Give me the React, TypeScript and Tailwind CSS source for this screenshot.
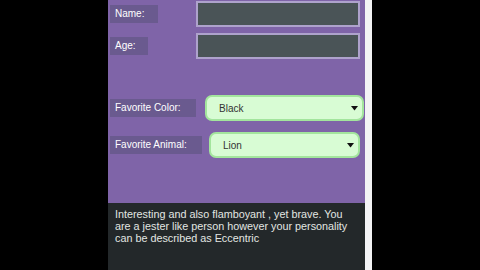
import React from 'react';

const font = { fontFamily: '"Liberation Sans", Arial, sans-serif' };

function Label({ text, w }: { text: string; w: string }) {
  return (
    <div className={`h-[18px] ${w} ml-[2px] bg-[#6a5a8f] text-white text-[10px] leading-[18px] pl-[5px] whitespace-nowrap`}>
      {text}
    </div>
  );
}

function Field() {
  return <div className="h-[26px] w-[164px] bg-[#4a5457] border-2 border-[#aea2cc]" />;
}

function Picker({ value, w }: { value: string; w: string }) {
  return (
    <div className={`h-[26px] ${w} bg-[#d8fcd4] border-2 border-[#a3e59d] rounded-[7px] flex items-center justify-between pl-[12px] pr-[4px] text-[10px] text-[#333]`}>
      <span>{value}</span>
      <svg width="7" height="5" viewBox="0 0 7 5">
        <path d="M0 0 L7 0 L3.5 4.5 Z" fill="#111" />
      </svg>
    </div>
  );
}

export default function App() {
  return (
    <div className="w-[480px] h-[270px] bg-black flex" style={font}>
      <div className="w-[108px]" />
      <div className="w-[257px] h-full flex flex-col">
        <div className="h-[203px] bg-[#7f64a8] flex flex-col">
          <div className="flex items-center justify-between pr-[5px] mt-[1px]">
            <Label text="Name:" w="w-[48px]" />
            <Field />
          </div>
          <div className="flex items-center justify-between pr-[5px] mt-[6px]">
            <Label text="Age:" w="w-[38px]" />
            <Field />
          </div>
          <div className="flex items-center justify-between pr-[1px] mt-[36px]">
            <Label text="Favorite Color:" w="w-[86px]" />
            <Picker value="Black" w="w-[159px]" />
          </div>
          <div className="flex items-center justify-between pr-[5px] mt-[11px]">
            <Label text="Favorite Animal:" w="w-[92px]" />
            <Picker value="Lion" w="w-[151px]" />
          </div>
        </div>
        <div className="flex-1 bg-[#23282a] text-[#e2e6e2] text-[10.8px] leading-[12px] pl-[7px] pr-[12px] pt-[5px]">
          Interesting and also flamboyant , yet brave. You are a jester like person however your personality can be described as Eccentric
        </div>
      </div>
      <div className="w-[7px] h-full bg-[#f3f3f5]" />
    </div>
  );
}
